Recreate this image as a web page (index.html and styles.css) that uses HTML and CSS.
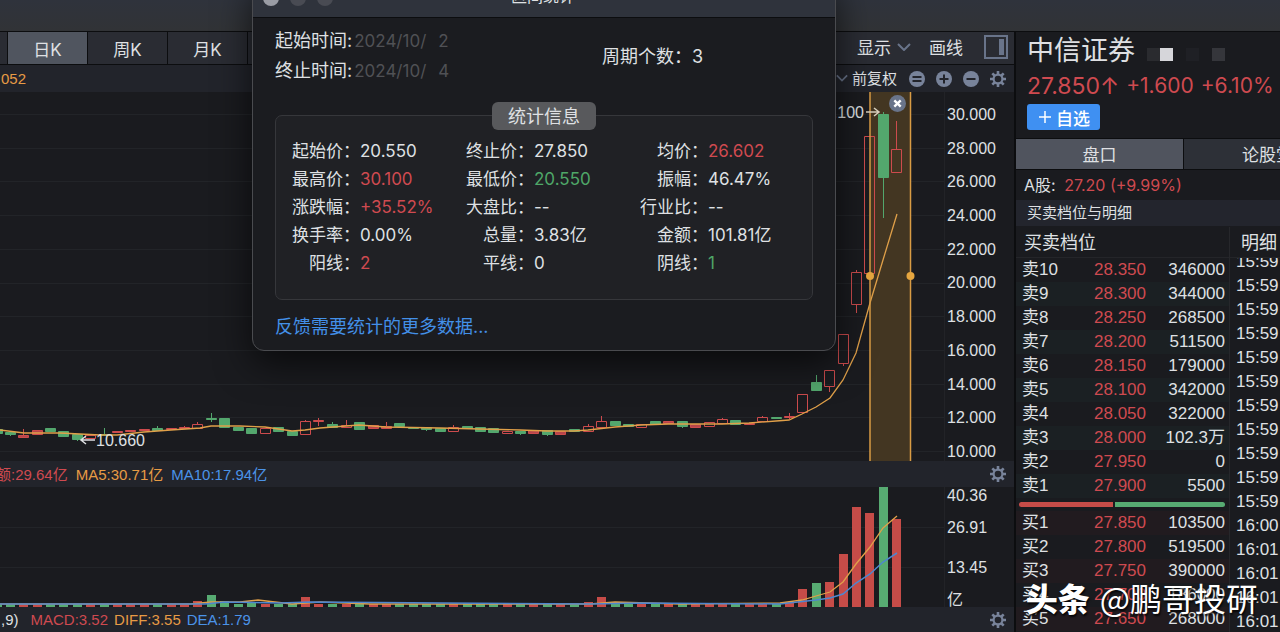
FILE: index.html
```html
<!DOCTYPE html>
<html lang="zh-CN">
<head>
<meta charset="utf-8">
<title>中信证券</title>
<link rel="stylesheet" href="styles.css">
</head>
<body>
<svg class="defs" aria-hidden="true">
  <symbol id="gear" viewBox="0 0 16 16">
    <circle cx="8" cy="8" r="4.4" fill="none" stroke="currentColor" stroke-width="2.2"/>
    <path d="M8 0v3M8 13v3M0 8h3M13 8h3M2.3 2.3l2.2 2.2M11.5 11.5l2.2 2.2M13.7 2.3l-2.2 2.2M4.5 11.5l-2.2 2.2" stroke="currentColor" stroke-width="2.6" fill="none"/>
  </symbol>
  <symbol id="chevron" viewBox="0 0 14 8"><path d="M1 1l6 6 6-6" fill="none" stroke="currentColor" stroke-width="2"/></symbol>
</svg>
<div class="app">
  <header class="topbar"></header>
  <div class="workspace">
    <main class="chart">
      <div class="toolbar">
        <nav class="periods">
          <button class="period stub" aria-label="分时"></button>
          <button class="period active">日K</button>
          <button class="period">周K</button>
          <button class="period">月K</button>
          <button class="period"></button>
        </nav>
        <div class="tools">
          <button class="tool">显示 <svg class="chevron"><use href="#chevron"/></svg></button>
          <button class="tool">画线</button>
          <button class="tool" aria-label="侧栏"><svg class="panel-icon" viewBox="0 0 24 24"><rect x="1" y="1" width="22" height="22" fill="none" stroke="currentColor" stroke-width="2"/><path d="M15 4h5v16h-5z" fill="currentColor"/></svg></button>
        </div>
      </div>
      <div class="strip">
        <span class="orange average">052</span>
        <div class="adjust">
          <button class="tool small"><svg class="chevron"><use href="#chevron"/></svg>前复权</button>
          <button class="icon" aria-label="重置"><svg viewBox="0 0 16 16"><circle cx="8" cy="8" r="8" fill="currentColor"/><path d="M3.500 6h9M3.500 10h9" class="cut"/></svg></button>
          <button class="icon" aria-label="放大"><svg viewBox="0 0 16 16"><circle cx="8" cy="8" r="8" fill="currentColor"/><path d="M3.500 8h9M8 3.500v9" class="cut"/></svg></button>
          <button class="icon" aria-label="缩小"><svg viewBox="0 0 16 16"><circle cx="8" cy="8" r="8" fill="currentColor"/><path d="M3.500 8h9" class="cut"/></svg></button>
          <button class="icon" aria-label="设置"><svg><use href="#gear"/></svg></button>
        </div>
      </div>
      <div class="pane price">
        <div class="plot">
          <svg id="price-plot" viewBox="0 0 944 369" preserveAspectRatio="xMaxYMin"></svg>
          <button class="close" aria-label="关闭"><svg viewBox="0 0 16 16"><circle cx="8" cy="8" r="8" fill="#69748a"/><path d="M5 5l6 6M11 5l-6 6" stroke="#fff" stroke-width="2.200"/></svg></button>
        </div>
        <div class="axis">
          <span>30.000</span><span>28.000</span><span>26.000</span><span>24.000</span><span>22.000</span><span>20.000</span><span>18.000</span><span>16.000</span><span>14.000</span><span>12.000</span><span>10.000</span>
        </div>
      </div>
      <div class="strip legend">
        <div class="values amounts"><span class="red">额:29.64亿</span><span class="orange">MA5:30.71亿</span><span class="blue">MA10:17.94亿</span></div>
        <button class="icon" aria-label="设置"><svg><use href="#gear"/></svg></button>
      </div>
      <div class="pane volume">
        <div class="plot"><svg id="volume-plot" viewBox="0 0 944 120" preserveAspectRatio="xMaxYMin"></svg></div>
        <div class="axis"><span>40.36</span><span>26.91</span><span>13.45</span><span>亿</span></div>
      </div>
      <div class="strip legend">
        <div class="values macd"><span class="params">,9)</span><span class="red">MACD:3.52</span><span class="orange">DIFF:3.55</span><span class="blue">DEA:1.79</span></div>
        <button class="icon" aria-label="设置"><svg><use href="#gear"/></svg></button>
      </div>
    </main>

    <aside class="quote">
      <div class="stock">
        <h1>中信证券 <span class="code"><i></i><i></i><i></i><i></i><i></i><i></i></span></h1>
        <p class="last"><span>27.850↑</span><span>+1.600</span><span>+6.10%</span></p>
        <button class="watch"><svg viewBox="0 0 12 12"><path d="M6 0v12M0 6h12" stroke="#fff" stroke-width="1.500"/></svg>自选</button>
      </div>
      <nav class="tabs"><button class="active">盘口</button><button>论股堂</button></nav>
      <p class="ashare">A股: <span class="red">27.20 (+9.99%)</span></p>
      <h2>买卖档位与明细</h2>
      <div class="depth">
        <section class="book">
          <h3>买卖档位</h3>
          <table class="sell">
            <tr><th>卖10</th><td>28.350</td><td>346000</td></tr>
            <tr><th>卖9</th><td>28.300</td><td>344000</td></tr>
            <tr><th>卖8</th><td>28.250</td><td>268500</td></tr>
            <tr><th>卖7</th><td>28.200</td><td>511500</td></tr>
            <tr><th>卖6</th><td>28.150</td><td>179000</td></tr>
            <tr><th>卖5</th><td>28.100</td><td>342000</td></tr>
            <tr><th>卖4</th><td>28.050</td><td>322000</td></tr>
            <tr><th>卖3</th><td>28.000</td><td>102.3万</td></tr>
            <tr><th>卖2</th><td>27.950</td><td>0</td></tr>
            <tr><th>卖1</th><td>27.900</td><td>5500</td></tr>
          </table>
          <div class="ratio"><span></span><span></span></div>
          <table class="buy">
            <tr><th>买1</th><td>27.850</td><td>103500</td></tr>
            <tr><th>买2</th><td>27.800</td><td>519500</td></tr>
            <tr><th>买3</th><td>27.750</td><td>390000</td></tr>
            <tr><th>买4</th><td>27.700</td><td>186000</td></tr>
            <tr><th>买5</th><td>27.650</td><td>268000</td></tr>
          </table>
        </section>
        <section class="ticks">
          <h3>明细</h3>
          <div class="tick-view"><ol>
            <li>15:59</li><li>15:59</li><li>15:59</li><li>15:59</li><li>15:59</li><li>15:59</li><li>15:59</li><li>15:59</li><li>15:59</li><li>15:59</li><li>15:59</li><li>16:00</li><li>16:01</li><li>16:01</li><li>16:01</li><li>16:01</li>
          </ol></div>
        </section>
      </div>
    </aside>
  </div>

  <section class="dialog" role="dialog" aria-label="区间统计">
    <header class="titlebar"><div class="lights"><i></i><i></i><i></i></div><span>区间统计</span></header>
    <div class="dialog-body">
      <div class="range">
        <div>
          <p>起始时间:<time>2024/10/<span>2</span></time></p>
          <p>终止时间:<time>2024/10/<span>4</span></time></p>
        </div>
        <p class="count">周期个数：3</p>
      </div>
      <button class="stats-tab">统计信息</button>
      <dl class="stats">
        <dt>起始价：</dt><dd>20.550</dd><dt>终止价：</dt><dd>27.850</dd><dt>均价：</dt><dd class="red">26.602</dd>
        <dt>最高价：</dt><dd class="red">30.100</dd><dt>最低价：</dt><dd class="green">20.550</dd><dt>振幅：</dt><dd>46.47%</dd>
        <dt>涨跌幅：</dt><dd class="red">+35.52%</dd><dt>大盘比：</dt><dd>--</dd><dt>行业比：</dt><dd>--</dd>
        <dt>换手率：</dt><dd>0.00%</dd><dt>总量：</dt><dd>3.83亿</dd><dt>金额：</dt><dd>101.81亿</dd>
        <dt>阳线：</dt><dd class="red">2</dd><dt>平线：</dt><dd>0</dd><dt>阴线：</dt><dd class="green">1</dd>
      </dl>
      <a class="feedback" href="#">反馈需要统计的更多数据...</a>
    </div>
  </section>
  <div class="watermark"><b>头条</b><span>@鹏哥投研</span></div>
</div>
<script src="charts.js"></script>
</body>
</html>
```
FILE: styles.css
```css
* { box-sizing: border-box; }
body, h1, h2, h3, p, dl, dd, ol { margin: 0; padding: 0; font-weight: 400; }
body {
  background: #1a1b1f;
  color: #dfe0e3;
  font-family: Inter, "Noto Sans CJK SC", sans-serif;
  font-size: 17px;
}
button {
  border: 0;
  padding: 0;
  background: none;
  color: inherit;
  font: inherit;
}
svg { display: block; }
.defs { position: absolute; width: 0; height: 0; }
.red { color: #cf4a50; }
.green { color: #4fa768; }
.orange { color: #e79b45; }
.blue { color: #4b93e8; }

.app { position: relative; display: flex; flex-direction: column; height: 100vh; overflow: hidden; }
.topbar { flex: none; height: 32px; background: linear-gradient(#2f333c, #313336); border-bottom: 1px solid #0c0d0f; }
.workspace { display: flex; flex: 1; min-height: 0; }
.chart { flex: 1; min-width: 0; }

.toolbar { display: flex; justify-content: space-between; height: 33px; background: #2a2c33; border-bottom: 1px solid #0c0d0f; }
.periods { display: flex; }
.period { width: 80px; border-right: 1px solid #0c0d0f; font-size: 17px; }
.period.stub { width: 8px; }
.period.active { background: #50555f; }
.tools { display: flex; align-items: center; gap: 18px; padding: 0 6px 3px 0; }
.tool { display: flex; align-items: center; gap: 6px; }
.tool:last-child { margin-left: 3px; }
.tool.small { margin: 0 1px 2px 0; font-size: 15px; gap: 4px; }
.chevron { width: 14px; height: 8px; color: #69748a; }
.small .chevron { width: 12px; }
.panel-icon { width: 24px; height: 24px; color: #69748a; }

.strip { display: flex; justify-content: space-between; align-items: center; height: 27px; padding-right: 8px; background: #22242b; font-family: "Liberation Sans", "Noto Sans CJK SC", sans-serif; font-size: 15px; }
.legend { height: 26px; }
.average { padding-left: 1px; }
.adjust { display: flex; align-items: center; gap: 11px; }
.icon { color: #78839a; }
.icon svg { width: 16px; height: 16px; }
.cut { stroke: #22242b; stroke-width: 2; }
.values { display: flex; padding-bottom: 2px; }
.amounts { gap: 8px; margin-left: -4px; }
.macd { gap: 6px; padding-left: 1px; }
.params { padding-right: 6px; }

.pane { display: flex; }
.plot { position: relative; flex: 1; min-width: 0; }
.plot > svg { width: 100%; }
.price .plot > svg { height: 369px; }
.volume .plot > svg { height: 120px; }
.axis { width: 70px; padding-left: 2px; border-left: 1px solid #222327; font-family: "Liberation Sans", "Noto Sans CJK SC", sans-serif; font-size: 16px; line-height: 18px; }
.price .axis { display: flex; flex-direction: column; justify-content: space-between; padding-top: 14px; }
.volume .axis { display: grid; grid-template-rows: 32px 40px 32px 16px; }
.close { position: absolute; top: 3px; right: 38px; }
.close svg { width: 17px; height: 17px; }
.tag { font-family: "Liberation Sans", sans-serif; font-size: 16px; fill: #dfe0e3; }
.grid { stroke: #222428; }
.up { fill: none; stroke: #cd4b4d; }
.down { fill: #53a76d; stroke: #53a76d; }
.vol-up { fill: #c64c48; }
.vol-down { fill: #57ab72; }
.ma5 { fill: none; stroke: #e0a049; stroke-width: 1.3; }
.ma10 { fill: none; stroke: #4e86cf; stroke-width: 1.5; }

.quote { flex: none; width: 266px; overflow: hidden; border-left: 2px solid #0c0d0f; }
.stock { height: 107px; padding: 0 11px; border-bottom: 1px solid #0c0d0f; }
h1 { display: flex; align-items: center; gap: 12px; font-size: 27px; line-height: 38px; }
.code { display: flex; padding-top: 7px; }
.code i { width: 13px; height: 13px; }
.code i:nth-child(1) { background: #2a2b2f; }
.code i:nth-child(2) { background: #d6d6da; }
.code i:nth-child(4) { background: #1f2025; }
.code i:nth-child(6) { background: #35363b; }
.last { display: flex; gap: 7px; color: #cf4a50; font-size: 21px; line-height: 32px; white-space: nowrap; }
.last span:first-child { font-size: 23px; }
.watch { display: flex; align-items: center; gap: 5px; height: 26px; margin-top: 2px; padding: 0 10px 0 12px; border-radius: 3px; background: #3f90f2; color: #fff; font-size: 17px; font-weight: 500; }
.watch svg { width: 12px; height: 12px; }
.tabs { display: flex; height: 31px; border-bottom: 1px solid #0c0d0f; }
.tabs button { flex: none; width: 168px; padding-bottom: 2px; border-right: 1px solid #0c0d0f; background: #2d3037; }
.tabs .active { background: #50545e; }
.ashare { padding-left: 8px; font-size: 16px; line-height: 30px; white-space: pre; }
.ashare span { padding-left: 4px; }
h2 { height: 27px; padding-left: 11px; background: #23252d; font-size: 15px; line-height: 25px; border-bottom: 1px solid #1a1b1f; }
.depth { display: flex; font-family: "Liberation Sans", "Noto Sans CJK SC", sans-serif; }
.book { flex: none; width: 214px; border-right: 1px solid #26272b; }
h3 { height: 31px; padding-left: 8px; border-bottom: 1px solid #242529; font-size: 18px; line-height: 33px; white-space: nowrap; }
table { width: 100%; border-collapse: collapse; line-height: 24px; }
tr { height: 24px; }
th { width: 60px; padding: 0 0 0 6px; text-align: left; font-weight: 400; }
td { padding: 0 4px 0 0; text-align: right; }
td:nth-child(2) { width: 70px; padding: 0; color: #cf4a50; }
.sell tr:nth-child(even) { background: #1b2023; }
.buy tr:nth-child(odd) { background: #211b1f; }
.ratio { display: flex; gap: 2px; height: 13px; padding: 4px 4px 4px 3px; }
.ratio span { flex: 94; border-radius: 3px 0 0 3px; background: #c64c48; }
.ratio span:last-child { flex: 111; border-radius: 0 3px 3px 0; background: #57ab72; }
.ticks { flex: 1; min-width: 0; }
.ticks h3 { padding-left: 11px; }
.tick-view { overflow: hidden; }
ol { margin-top: -8px; padding-left: 6px; list-style: none; line-height: 24px; }

.dialog { position: absolute; top: -22px; left: 252px; width: 584px; overflow: hidden; border: 1px solid #4a4b4f; border-radius: 12px; background: #1b1c20; box-shadow: 0 12px 36px rgba(0, 0, 0, .65); }
.titlebar { display: grid; grid-template-columns: 1fr auto 1fr; align-items: center; height: 39px; padding-left: 10px; background: #2f333c; border-bottom: 1px solid #0c0d0f; font-size: 16px; line-height: 18px; }
.titlebar > span { padding: 0 12px 4px 0; }
.lights { display: flex; gap: 11px; }
.lights i { width: 16px; height: 16px; border-radius: 50%; background: #494b53; }
.lights i:first-child { background: #9a9ca4; }
.dialog-body { display: flex; flex-direction: column; padding: 8px 22px 8px; }
.range { display: grid; grid-template-columns: 327px 1fr; align-items: center; font-size: 18px; line-height: 29px; }
.range time { padding-left: 2px; color: #505155; font-size: 17px; }
.range time span { padding-left: 12px; }
.stats-tab { align-self: center; z-index: 1; width: 104px; height: 28px; margin: 16px 0 -15px; padding-bottom: 2px; border-radius: 6px; background: #58595c; font-size: 18px; }
.stats { display: grid; grid-template-columns: repeat(3, 70px 104px); padding: 21px 14px 22px; border: 1px solid #36373b; border-radius: 7px; background: #202125; line-height: 28px; }
dt { text-align: right; white-space: nowrap; }
.feedback { margin-top: 12px; color: #4390e8; font-size: 18px; line-height: 30px; text-decoration: none; }

.watermark { position: absolute; right: 22px; bottom: 11px; display: flex; gap: 10px; color: #fff; font-family: "Noto Sans CJK SC", sans-serif; font-size: 32px; line-height: 48px; text-shadow: 1px 2px 2px rgba(0, 0, 0, .85); }
.watermark b { font-weight: 900; }
```
FILE: charts.js
```js
// Candles: [x, direction, body top, body bottom, wick top, wick bottom]
const candles = [
  [-3,'d',337,341],[10,'d',340,342,339,344],[23,'r',343,345,337,346],[37,'r',338,342],[50,'d',336,339],[63,'d',339,344],
  [77,'d',342,347,342,349],[90,'u',343,346],[104,'d',342,343,336,344],[117,'r',339,340],[130,'r',338,339],
  [144,'r',337,338],[157,'d',336,338,334,339],[171,'r',336,337],[184,'r',335,336,334,336],[197,'u',332,336,330,336],
  [211,'d',326,327,321,330],[224,'d',326,335],[238,'d',335,338],[251,'d',336,341],[265,'u',336,341],
  [278,'d',335,339],[292,'d',339,343],[305,'u',329,342,328,342],[318,'r',328,329,326,334],[332,'d',332,335,330,336],
  [346,'u',333,335,328,336],[359,'d',330,337,330,338],[373,'r',333,336],[386,'r',334,336,330,336],[399,'d',331,334],
  [413,'d',335,336],[426,'d',335,337,335,339],[440,'d',336,339],[453,'u',335,339,333,339],[467,'d',334,336],
  [480,'d',335,339],[493,'d',336,340],[507,'u',339,341,339,342],[520,'d',339,341,339,343],[533,'r',338,341],
  [547,'d',338,342,338,344],[560,'r',339,342],[574,'d',337,339],[588,'u',334,339,332,339],[601,'u',329,335,324,335],
  [615,'d',329,333],[628,'d',332,334],[641,'u',332,335],[655,'d',329,332],[668,'r',329,331],[682,'d',329,334,329,336],
  [695,'r',332,335],[709,'u',330,334],[722,'u',327,331,326,331],[735,'d',328,332],[749,'r',331,332],
  [762,'u',325,329,324,329],[776,'d',325,326],[789,'r',324,325,321,327],[802,'u',302,320],[816,'d',290,298,283,299],
  [829,'u',278,294,278,300],[843,'u',242,271,242,274],[856,'u',180,212,178,221],[869,'u',44,181],
  [883,'d',22,85,20,126],[896,'u',57,80,29,80]
];
// Bars that rise above the usual turnover, by x
const volumes = {197:6,211:12,224:6,251:4,305:10,588:5,601:10,789:5,802:18,816:24,829:25,843:53,856:100,869:94,883:120,896:88};

const hline = y => `<path class="grid" d="M-2000 ${y}.5H944"/>`;
let price = '';
for (let i = 0; i < 11; i++) price += hline(Math.round(22 + i * 33.7));
price += '<path d="M870 0h41v369h-41z" fill="#433622"/>';
let volume = hline(40) + hline(80);
for (const [x, kind, top, bottom, high, low] of candles) {
  const down = kind === 'd';
  const fill = kind === 'r' ? ' style="fill:#b7464a"' : '';
  price += `<path class="${down ? 'down' : 'up'}"${fill} d="M${x - 4.5} ${top + .5}h10V${bottom + .5}h-10z`;
  if (high !== undefined) price += `M${x + .5} ${high}V${top}M${x + .5} ${bottom}V${low}`;
  price += '"/>';
  const h = volumes[x] || 3;
  volume += `<path class="${down ? 'vol-down' : 'vol-up'}" d="M${x - 4} 120v-${h}h9v${h}z"/>`;
}
price += '<path class="ma5" d="M0 338L24 341 60 341 100 343 117 343 144 340 171 338 200 336 211 334 240 334 265 335 292 339 305 338 320 336 346 334 359 333 386 335 440 336 480 337 520 338 547 339 574 339 588 338 615 335 641 333 668 332 722 332 749 331 776 329 789 328 802 322 816 315 830 306 843 288 856 261 870 211 883 168 897 122"/>';
price += '<path d="M870 0V369M910.5 0V369" stroke="#d99c44" stroke-width="1.5"/><g fill="#e6a63f"><circle cx="870" cy="184" r="4"/><circle cx="910.500" cy="184" r="4"/></g>';
price += '<text class="tag" x="96" y="354">10.660</text><path d="M81 348h14M86 344l-5 4 5 4" fill="none" stroke="#dfe0e3" stroke-width="1.500"/>';
price += '<text class="tag" x="864" y="26" text-anchor="end">30.100</text><path d="M866 20h12M874 16l5 4-5 4" fill="none" stroke="#d8d0bd" stroke-width="1.500"/>';
volume += '<path class="ma5" d="M0 117L190 117 211 115 240 115 258 113 275 115 292 117 320 115 370 117 590 117 615 115 680 117 780 116 802 113 816 109 830 105 843 95 856 77 870 60 883 41 897 29"/>';
volume += '<path class="ma10" d="M0 117L205 117 225 115 280 116 310 115 590 117 640 116 780 117 816 113 830 111 843 107 856 96 870 87 883 75 897 66"/>';
document.getElementById('price-plot').innerHTML = price;
document.getElementById('volume-plot').innerHTML = volume;
```
